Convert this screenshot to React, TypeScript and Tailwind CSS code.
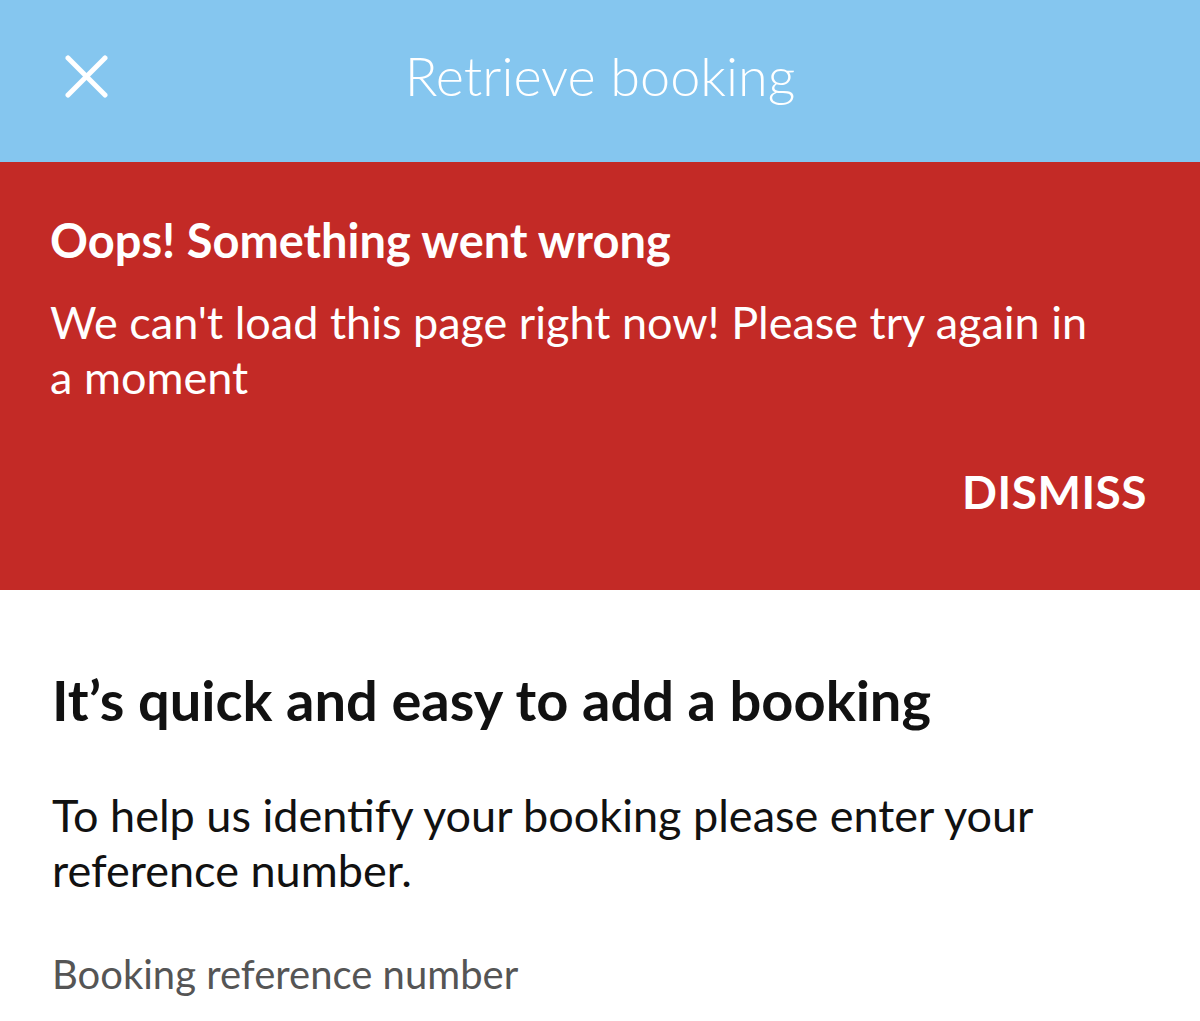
import React from 'react';

const App: React.FC = () => {
  return (
    <div className="w-[1200px] h-[1021px] overflow-hidden bg-white font-['Lato',sans-serif]">
      {/* Header */}
      <div className="h-[162px] bg-[#85c6ef] grid grid-cols-[1fr_auto_1fr] items-start">
        <div className="pl-[65px] pt-[55px]">
          <svg width="43" height="43" viewBox="0 0 43 43" fill="none" stroke="white" strokeWidth="5" strokeLinecap="round">
            <path d="M3 3 L40 40" />
            <path d="M40 3 L3 40" />
          </svg>
        </div>
        <h1 className="text-white text-[54px] font-light leading-[64px] pt-[44px]">Retrieve booking</h1>
        <div />
      </div>

      {/* Error banner */}
      <div className="h-[428px] bg-[#c32a26] text-white pl-[50px] pr-[53px] pt-[50px] flex flex-col">
        <h2 className="text-[47px] font-bold leading-[56px]">Oops! Something went wrong</h2>
        <p className="text-[45px] leading-[55px] mt-[27px] max-w-[1060px]">
          We can't load this page right now! Please try again in a moment
        </p>
        <div className="mt-[64px] flex justify-end">
          <button className="text-[46px] font-bold leading-none tracking-[0.5px]">DISMISS</button>
        </div>
      </div>

      {/* Form intro */}
      <div className="pl-[52px] pr-[50px] pt-[78px] text-[#111]">
        <h3 className="text-[56px] font-bold leading-[64px]">It’s quick and easy to add a booking</h3>
        <p className="text-[45px] leading-[55px] mt-[56px]">
          To help us identify your booking please enter your reference number.
        </p>
        <label className="block text-[40px] leading-[52px] text-[#555] mt-[50px]">Booking reference number</label>
      </div>
    </div>
  );
};

export default App;
